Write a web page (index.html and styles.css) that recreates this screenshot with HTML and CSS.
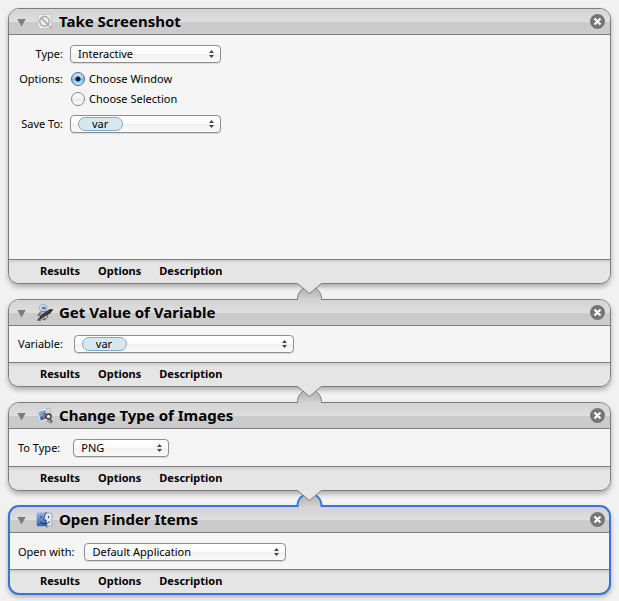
FILE: index.html
```html
<!DOCTYPE html>
<html lang="en">
<head>
<meta charset="utf-8">
<title>Workflow</title>
<link rel="stylesheet" href="styles.css">
</head>
<body>
<svg class="defs" aria-hidden="true">
  <defs>
    <linearGradient id="bump" x1="0" y1="0" x2="0" y2="1"><stop offset="0.3" stop-color="#bcbcbc"/><stop offset="1" stop-color="#d6d6d6"/></linearGradient>
    <linearGradient id="finder" x1="0" y1="0" x2="0" y2="1"><stop offset="0" stop-color="#8fb4e6"/><stop offset="1" stop-color="#2d61b4"/></linearGradient>
    <symbol id="link" viewBox="0 0 27 18">
      <path d="M1.5 18V16.500C1.500 11 4 7.500 7 5.500H20C23 7.500 25.500 11 25.500 16.500V18Z" fill="url(#bump)"/>
      <path class="arc" d="M1.500 17V15.500C1.500 11 4 7.500 7 5.500M25.500 17V15.500C25.500 11 23 7.500 20 5.500" fill="none"/>
      <path d="M1 0H26L13.500 10.500Z" fill="#e5e5e5"/>
      <path d="M1 0.500H1.500L13.500 10.500L25.500 0.500H26" fill="none" stroke="#7c7c7c"/>
    </symbol>
    <symbol id="close" viewBox="0 0 15 15">
      <circle cx="7.500" cy="7.500" r="7.500" fill="#757575"/>
      <path d="M4.500 4.500L10.500 10.500M10.500 4.500L4.500 10.500" stroke="#fff" stroke-width="2.200"/>
    </symbol>
  </defs>
</svg>
<main class="workflow">
  <section class="action action-tall">
    <header class="head">
      <button class="toggle" aria-label="Collapse"></button>
      <svg class="icon" viewBox="0 0 18 18" aria-hidden="true">
        <path d="M2 2L5 1L6 2L14 1L15 4L15.500 13L13 15L4 16L2 12Z" fill="#f0f0ee" stroke="#bdbdbb" stroke-width=".8"/>
        <circle cx="8.500" cy="8.300" r="4.800" fill="#efefed" stroke="#a2a2a2" stroke-width="1.300"/>
        <path d="M5.300 5L11.800 11.500" stroke="#a2a2a2" stroke-width="1.400"/>
        <path d="M12 12L15 15" stroke="#999" /><circle cx="15.500" cy="14.500" r=".9" fill="#dc9878"/>
      </svg>
      <h2>Take Screenshot</h2>
      <button class="close" aria-label="Remove"><svg viewBox="0 0 15 15"><use href="#close"/></svg></button>
    </header>
    <div class="body form">
      <label for="type">Type:</label>
      <div class="popup popup-medium"><select id="type"><option>Interactive</option></select><svg class="arrows" viewBox="0 0 5 8"><path d="M0 3L2.500 0L5 3ZM0 5L2.500 8L5 5Z"/></svg></div>
      <span class="radio-title" id="opts">Options:</span>
      <div class="radios" role="radiogroup" aria-labelledby="opts">
        <label><input type="radio" name="mode" checked>Choose Window</label>
        <label><input type="radio" name="mode">Choose Selection</label>
      </div>
      <label for="save">Save To:</label>
      <div class="popup popup-medium popup-token"><span class="token"></span><select id="save"><option>var</option></select><svg class="arrows" viewBox="0 0 5 8"><path d="M0 3L2.500 0L5 3ZM0 5L2.500 8L5 5Z"/></svg></div>
    </div>
    <footer class="foot"><button>Results</button><button>Options</button><button>Description</button></footer>
  </section>

  <section class="action">
    <svg class="link"><use href="#link"/></svg>
    <header class="head">
      <button class="toggle" aria-label="Collapse"></button>
      <svg class="icon" viewBox="0 0 18 18" aria-hidden="true">
        <path d="M4 8L10 7L12 13L8 16L4 14Z" fill="#b9bcc2" stroke="#62656c" stroke-width=".8"/>
        <path d="M4 9L2 12M3 14L2 16H5M8 14L9 16" stroke="#555861" stroke-width="1.300" fill="none"/>
        <ellipse cx="7.300" cy="3.800" rx="4" ry="3.300" fill="#e8ebef" stroke="#858991" stroke-width=".7"/>
        <ellipse cx="7.700" cy="4" rx="2.500" ry="1.500" fill="#3b89c8"/>
        <path d="M2.500 16L5 11L14 5L17.500 5.500L14 9.500Z" fill="#2c2d36"/>
        <path d="M6 12L14 7" stroke="#666875" stroke-width=".6"/>
      </svg>
      <h2>Get Value of Variable</h2>
      <button class="close" aria-label="Remove"><svg viewBox="0 0 15 15"><use href="#close"/></svg></button>
    </header>
    <div class="body row">
      <label for="variable">Variable:</label>
      <div class="popup popup-wide popup-token"><span class="token"></span><select id="variable"><option>var</option></select><svg class="arrows" viewBox="0 0 5 8"><path d="M0 3L2.500 0L5 3ZM0 5L2.500 8L5 5Z"/></svg></div>
    </div>
    <footer class="foot"><button>Results</button><button>Options</button><button>Description</button></footer>
  </section>

  <section class="action">
    <svg class="link"><use href="#link"/></svg>
    <header class="head">
      <button class="toggle" aria-label="Collapse"></button>
      <svg class="icon" viewBox="0 0 18 18" aria-hidden="true">
        <path d="M7 3L14 1L16 9L9 13Z" fill="#d8d5cf" stroke="#aaa" stroke-width=".6"/>
        <path d="M1 4L10 1L14 12L4 15.500Z" fill="#f7f7f7" stroke="#b8b8b8" stroke-width=".6"/>
        <path d="M2.300 5L9.500 2.700L12.300 11L4.800 13.700Z" fill="#73a8df"/>
        <path d="M4 10L7 9L8 12.400L4.800 13.400Z" fill="#386da7"/>
        <path d="M7 6L9 5.500L10.500 11.500L8 12Z" fill="#a35f48"/>
        <path d="M10 14L15 11L17 15L15 17Z" fill="#a0a0a0"/>
        <circle cx="12.500" cy="9.500" r="2.500" fill="#dce6ee" stroke="#363b43" stroke-width="1.300"/>
        <path d="M14 12L16 15" stroke="#66696d" stroke-width="1.600"/>
      </svg>
      <h2>Change Type of Images</h2>
      <button class="close" aria-label="Remove"><svg viewBox="0 0 15 15"><use href="#close"/></svg></button>
    </header>
    <div class="body row row-roomy">
      <label for="format">To Type:</label>
      <div class="popup popup-small"><select id="format"><option>PNG</option></select><svg class="arrows" viewBox="0 0 5 8"><path d="M0 3L2.500 0L5 3ZM0 5L2.500 8L5 5Z"/></svg></div>
    </div>
    <footer class="foot"><button>Results</button><button>Options</button><button>Description</button></footer>
  </section>

  <section class="action action-selected">
    <svg class="link"><use href="#link"/></svg>
    <header class="head">
      <button class="toggle" aria-label="Collapse"></button>
      <svg class="icon" viewBox="0 0 18 18" aria-hidden="true">
        <rect x="1" y="2" width="15" height="13" rx="1" fill="#dce5f1" stroke="#7890b3" stroke-width=".6"/>
        <path d="M1 2H10C8.500 5 8 7 8 9H10L10.500 15H1Z" fill="url(#finder)"/>
        <path d="M10.500 1C8.500 4 8 6.500 8 9H10C10 12 10.500 14 11 16.500" fill="none" stroke="#20324e" stroke-width=".8"/>
        <path d="M5 5V7M12.500 5V7M4 11C7 13.300 11 13.300 14 10.500" fill="none" stroke="#1c2e4b" stroke-width=".9"/>
      </svg>
      <h2>Open Finder Items</h2>
      <button class="close" aria-label="Remove"><svg viewBox="0 0 15 15"><use href="#close"/></svg></button>
    </header>
    <div class="body row">
      <label for="app">Open with:</label>
      <div class="popup popup-large"><select id="app"><option>Default Application</option></select><svg class="arrows" viewBox="0 0 5 8"><path d="M0 3L2.500 0L5 3ZM0 5L2.500 8L5 5Z"/></svg></div>
    </div>
    <footer class="foot"><button>Results</button><button>Options</button><button>Description</button></footer>
  </section>
</main>
</body>
</html>
```
FILE: styles.css
```css
* { box-sizing: border-box; }

body {
  margin: 0;
  background: #f1f1f1;
  color: #000;
  font: 11px/18px "Noto Sans", "Open Sans", sans-serif;
}

button, select, input { font: inherit; color: inherit; margin: 0; }
button { padding: 0; border: 0; background: none; }

.defs { position: absolute; width: 0; height: 0; }

.workflow {
  display: flex;
  flex-direction: column;
  gap: 15px;
  padding: 8px 8px 7px;
}

.action {
  position: relative;
  border: 1px solid #7c7c7c;
  border-radius: 11px;
  background: #f5f5f5;
  box-shadow: 0 3px 5px rgba(0, 0, 0, 0.28);
}

.action-selected::after {
  content: "";
  position: absolute;
  inset: -2px -1px;
  border: 2px solid #3377d3;
  border-radius: 11px;
  pointer-events: none;
}

.link {
  --arc: #7c7c7c;
  --arc-width: 1px;
  position: absolute;
  z-index: 1;
  top: -17px;
  left: 0;
  right: 0;
  width: 27px;
  height: 18px;
  margin: 0 auto;
}

.action-selected .link { --arc: #3377d3; --arc-width: 2px; }
.arc { stroke: var(--arc); stroke-width: var(--arc-width); }

.head {
  display: flex;
  align-items: center;
  height: 26px;
  padding: 0 5px 0 8px;
  border-bottom: 1px solid #7c7c7c;
  border-radius: 10px 10px 0 0;
  background: linear-gradient(#d3d3d3, #dedede 13px, #cacaca 13px, #cccccc);
}

.head h2 {
  flex: 1;
  margin: 0 0 0 5px;
  padding-bottom: 2px;
  font-size: 15px;
  line-height: 22px;
}

.toggle {
  width: 9px;
  height: 8px;
  margin-top: 2px;
  background: #7d7d7d;
  clip-path: polygon(0 0, 100% 0, 50% 100%);
}

.icon { width: 18px; height: 18px; margin-left: 10px; }

.close { width: 15px; height: 15px; }
.close svg { display: block; width: 15px; height: 15px; }

.body { padding: 9px; }

.row { display: flex; gap: 11px; }
.row-roomy { gap: 13px; padding-top: 10px; }
.action-selected .row { gap: 10px; padding: 10px 9px 8px; }

.form {
  display: grid;
  grid-template-columns: 45px auto;
  justify-content: start;
  align-content: start;
  gap: 6px 7px;
  padding-top: 10px;
}
.form > label, .radio-title { text-align: right; white-space: nowrap; }
.radio-title { line-height: 20px; }

.action-tall .body { min-height: 224px; }

.radios label { display: flex; align-items: center; height: 20px; gap: 4px; }
.radios { padding-left: 1px; }

input[type="radio"] {
  appearance: none;
  width: 14px;
  height: 14px;
  border: 1px solid #858585;
  border-radius: 50%;
  background: linear-gradient(#fff, #f1f1f1 50%, #e7e7e7 50%, #fff);
}
input[type="radio"]:checked {
  border-color: #45648f;
  background:
    radial-gradient(circle, #0b1c33 0 2px, transparent 3px),
    linear-gradient(#d5e5f8, #9cc4ee 50%, #79b5ec 50%, #c5f0ff);
}

.popup {
  position: relative;
  height: 18px;
  border: 1px solid #8e8e8e;
  border-radius: 4px;
  background: linear-gradient(#fff, #fbfbfb 50%, #f0f0f0 50%, #fafafa);
  box-shadow: 0 1px 1px rgba(0, 0, 0, 0.12);
}
.popup select {
  display: block;
  position: relative;
  width: 100%;
  height: 16px;
  padding: 0 20px 0 7px;
  border: 0;
  appearance: none;
  background: none;
  line-height: 16px;
}
.popup-token select { padding-left: 21px; }
.popup-small { width: 96px; }
.popup-medium { width: 151px; }
.popup-large { width: 202px; }
.popup-wide { width: 220px; }

.token {
  position: absolute;
  top: 1px;
  left: 7px;
  width: 45px;
  height: 14px;
  border: 1px solid #7fabc8;
  border-radius: 7px;
  background: #d8e6ee;
}

.arrows {
  position: absolute;
  top: 4px;
  right: 6px;
  width: 5px;
  height: 8px;
  fill: #444;
  pointer-events: none;
}

.foot {
  display: flex;
  gap: 18px;
  height: 24px;
  padding: 0 31px;
  border-top: 1px solid #7c7c7c;
  border-radius: 0 0 10px 10px;
  background: linear-gradient(#cecece, #e5e5e5 4px);
}
.foot button { height: 22px; font-weight: bold; }
```
